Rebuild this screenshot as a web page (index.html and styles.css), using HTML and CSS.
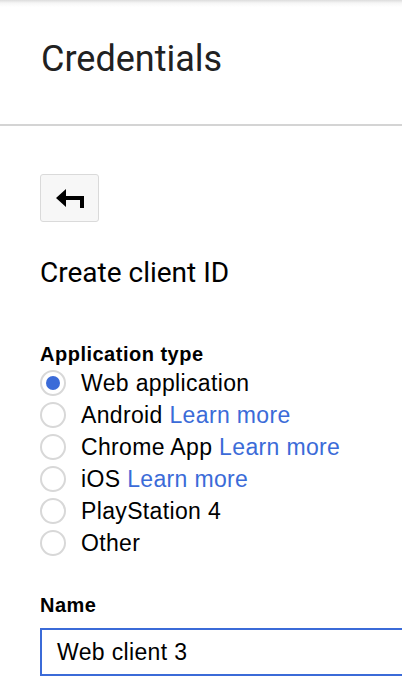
FILE: index.html
```html
<!DOCTYPE html>
<html>
<head>
<meta charset="utf-8">
<link rel="stylesheet" href="styles.css">
</head>
<body>
<header class="header">
  <h1 class="title">Credentials</h1>
</header>
<main class="content">
  <button class="back-btn" type="button" aria-label="Back">
    <svg width="28" height="19" viewBox="0 0 28 19">
      <path d="M0 9 L10 0 L10 7 L28 7 L28 19 L24 19 L24 11 L10 11 L10 18 Z" fill="#000"/>
    </svg>
  </button>
  <h2 class="subtitle">Create client ID</h2>
  <div class="group">
    <div class="label">Application type</div>
    <label class="radio-row"><span class="radio checked"></span><span class="radio-text">Web application</span></label>
    <label class="radio-row"><span class="radio"></span><span class="radio-text">Android <a class="link">Learn more</a></span></label>
    <label class="radio-row"><span class="radio"></span><span class="radio-text">Chrome App <a class="link">Learn more</a></span></label>
    <label class="radio-row"><span class="radio"></span><span class="radio-text">iOS <a class="link">Learn more</a></span></label>
    <label class="radio-row"><span class="radio"></span><span class="radio-text">PlayStation 4</span></label>
    <label class="radio-row"><span class="radio"></span><span class="radio-text">Other</span></label>
  </div>
  <div class="group name-group">
    <div class="label">Name</div>
    <div class="input">Web client 3</div>
  </div>
</main>
</body>
</html>
```
FILE: styles.css
```css
html, body {
  margin: 0;
  padding: 0;
  background: #fff;
  overflow: hidden;
}
body {
  font-family: Roboto, "Liberation Sans", Arial, sans-serif;
  color: #000;
  width: 402px;
  height: 692px;
}
.header {
  height: 124px;
  border-bottom: 2px solid #d4d4d4;
  background: linear-gradient(to bottom, #dcdcdc 0px, #f6f6f6 3px, #ffffff 7px);
  padding-left: 41px;
  box-sizing: content-box;
  display: flex;
  align-items: flex-start;
}
.title {
  margin: 0;
  padding-top: 37px;
  font-size: 36px;
  font-weight: 400;
  line-height: 44px;
  color: #212121;
}
.content {
  padding-left: 40px;
  padding-top: 48px;
  display: flex;
  flex-direction: column;
  align-items: flex-start;
}
.back-btn {
  width: 59px;
  height: 48px;
  border: 1px solid #dadada;
  border-radius: 3px;
  background: #f7f7f7;
  padding: 0;
  display: flex;
  align-items: center;
  justify-content: center;
  box-sizing: border-box;
}
.subtitle {
  margin: 0;
  padding-top: 34px;
  font-size: 28px;
  font-weight: 400;
  line-height: 34px;
  color: #000;
}
.group {
  padding-top: 52px;
  font-family: "Liberation Sans", Arial, sans-serif;
  align-self: stretch;
}
.label {
  font-size: 20px;
  font-weight: 700;
  letter-spacing: 0.5px;
  line-height: 24px;
  margin-bottom: 1px;
}
.radio-row {
  display: flex;
  align-items: center;
  height: 32px;
}
.radio {
  width: 26px;
  height: 26px;
  border: 2px solid #d8d8d8;
  border-radius: 50%;
  box-sizing: border-box;
  display: flex;
  align-items: center;
  justify-content: center;
  flex: none;
}
.radio.checked::after {
  content: "";
  width: 14px;
  height: 14px;
  border-radius: 50%;
  background: #3b6bd8;
}
.radio-text {
  margin-left: 15px;
  font-size: 23px;
  letter-spacing: 0.35px;
  line-height: 26px;
}
.link {
  color: #3b6bd8;
}
.name-group {
  padding-top: 34px;
}
.input {
  margin-top: 11px;
  height: 48px;
  border: 2px solid #3b6bd8;
  border-right: none;
  box-sizing: border-box;
  padding-left: 15px;
  display: flex;
  align-items: center;
  font-size: 23px;
  letter-spacing: 0.35px;
}
```
